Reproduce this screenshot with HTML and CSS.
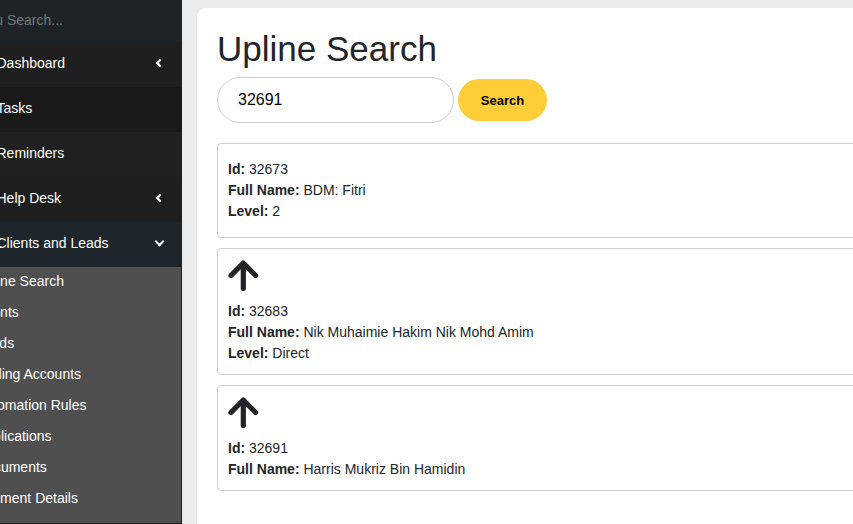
FILE: index.html
```html
<!DOCTYPE html>
<html>
<head>
<meta charset="utf-8">
<link rel="stylesheet" href="styles.css">
</head>
<body>
<div class="page">
  <aside class="sidebar">
    <div class="search-row"><span class="search-ph">Menu Search...</span></div>
    <div class="item item-a"><span class="label">Dashboard</span><span class="chev chev-left"></span></div>
    <div class="item item-b"><span class="label">Tasks</span></div>
    <div class="item item-c"><span class="label">Reminders</span></div>
    <div class="item item-a"><span class="label">Help Desk</span><span class="chev chev-left"></span></div>
    <div class="item item-open"><span class="label">Clients and Leads</span><span class="chev chev-down"></span></div>
    <div class="submenu">
      <div class="sub">Upline Search</div>
      <div class="sub">Clients</div>
      <div class="sub">Leads</div>
      <div class="sub">Mailing Accounts</div>
      <div class="sub">Automation Rules</div>
      <div class="sub">Applications</div>
      <div class="sub">Documents</div>
      <div class="sub">Payment Details</div>
    </div>
  </aside>
  <main class="main">
    <div class="panel">
      <h1 class="title">Upline Search</h1>
      <div class="search-form">
        <div class="input">32691</div>
        <button class="btn">Search</button>
      </div>
      <div class="results">
        <div class="result result-first">
          <div class="spacer"></div>
          <div class="line"><b>Id:</b> 32673</div>
          <div class="line"><b>Full Name:</b> BDM: Fitri</div>
          <div class="line"><b>Level:</b> 2</div>
        </div>
        <div class="result result-arrow">
          <div class="arrow-row">
            <svg class="arrow" width="31" height="31" viewBox="0 0 31 31"><polyline points="3,15.5 15.3,3 27.6,15.5" fill="none" stroke="#212529" stroke-width="5.2" stroke-linecap="round" stroke-linejoin="round"/><line x1="15.3" y1="5" x2="15.3" y2="28.5" stroke="#212529" stroke-width="5.2" stroke-linecap="round"/></svg>
          </div>
          <div class="line"><b>Id:</b> 32683</div>
          <div class="line"><b>Full Name:</b> Nik Muhaimie Hakim Nik Mohd Amim</div>
          <div class="line"><b>Level:</b> Direct</div>
        </div>
        <div class="result result-arrow">
          <div class="arrow-row">
            <svg class="arrow" width="31" height="31" viewBox="0 0 31 31"><polyline points="3,15.5 15.3,3 27.6,15.5" fill="none" stroke="#212529" stroke-width="5.2" stroke-linecap="round" stroke-linejoin="round"/><line x1="15.3" y1="5" x2="15.3" y2="28.5" stroke="#212529" stroke-width="5.2" stroke-linecap="round"/></svg>
          </div>
          <div class="line"><b>Id:</b> 32691</div>
          <div class="line"><b>Full Name:</b> Harris Mukriz Bin Hamidin</div>
        </div>
      </div>
    </div>
  </main>
</div>
</body>
</html>
```
FILE: styles.css
```css
html, body {
  margin: 0;
  padding: 0;
  overflow: hidden;
  width: 853px;
  height: 524px;
  background: #e9ecef;
  font-family: "Liberation Sans", Arial, sans-serif;
}
.page {
  display: flex;
  width: 1150px;
  height: 524px;
}
.sidebar {
  width: 182px;
  flex: 0 0 182px;
  background: #1f1f1f;
  overflow: hidden;
  display: flex;
  flex-direction: column;
}
.search-row {
  height: 42px;
  background: #1e2327;
  display: flex;
  align-items: center;
  overflow: hidden;
}
.search-ph {
  color: #74787c;
  font-size: 14px;
  margin-left: -32px;
  white-space: nowrap;
  margin-top: -2px;
}
.item {
  height: 45px;
  display: flex;
  align-items: center;
  justify-content: space-between;
  color: #ffffff;
  font-size: 14px;
  padding-right: 19px;
  overflow: hidden;
}
.item .label {
  margin-left: -3.5px;
  white-space: nowrap;
  margin-top: -3px;
}
.item-a { background: #1f1f1f; }
.item-b { background: #1a1a1a; }
.item-c { background: #202020; }
.item-open { background: #1e252b; }
.chev {
  width: 6px;
  height: 6px;
  border-left: 2.5px solid #fff;
  border-bottom: 2.5px solid #fff;
  box-sizing: border-box;
  margin-top: -3px;
}
.chev-left { transform: rotate(45deg); }
.chev-down { transform: rotate(-45deg); margin-top: -6px; width: 7px; height: 7px; }
.submenu {
  background: #4f4f4f;
  margin-right: 1px;
  padding-bottom: 8px;
  overflow: hidden;
}
.sub {
  height: 31px;
  line-height: 29px;
  color: #ffffff;
  font-size: 14px;
  margin-left: -24px;
  white-space: nowrap;
}
.main {
  flex: 1;
  padding: 8px 0 0 15px;
}
.panel {
  background: #ffffff;
  border-radius: 9px 0 0 0;
  height: 600px;
  padding: 21px 20px 0 20px;
}
.title {
  margin: 0;
  font-size: 35px;
  font-weight: 400;
  color: #212529;
  line-height: 40px;
}
.search-form {
  display: flex;
  align-items: center;
  gap: 4px;
  margin-top: 8px;
}
.input {
  height: 44px;
  border: 1px solid #cccccc;
  border-radius: 23px;
  font-size: 16px;
  line-height: 44px;
  padding-left: 20px;
  box-sizing: content-box;
  color: #000;
  width: 215px;
}
.btn {
  width: 89px;
  height: 42px;
  border: none;
  border-radius: 21px;
  background: #ffcd38;
  font-family: "Liberation Sans", Arial, sans-serif;
  font-weight: 700;
  font-size: 13px;
  color: #000;
  padding: 0;
}
.results {
  margin-top: 20px;
  display: flex;
  flex-direction: column;
  gap: 10px;
}
.result {
  border: 1px solid #cfcfcf;
  border-radius: 4px;
  padding: 11px 10px;
}
.result-first { padding-bottom: 15px; }
.result-arrow { padding-bottom: 10px; }
.spacer { height: 4px; }
.arrow-row { height: 41px; }
.arrow { display: block; }
.line {
  font-size: 14px;
  line-height: 21px;
  color: #212529;
}
.line b { font-weight: 700; }
```
